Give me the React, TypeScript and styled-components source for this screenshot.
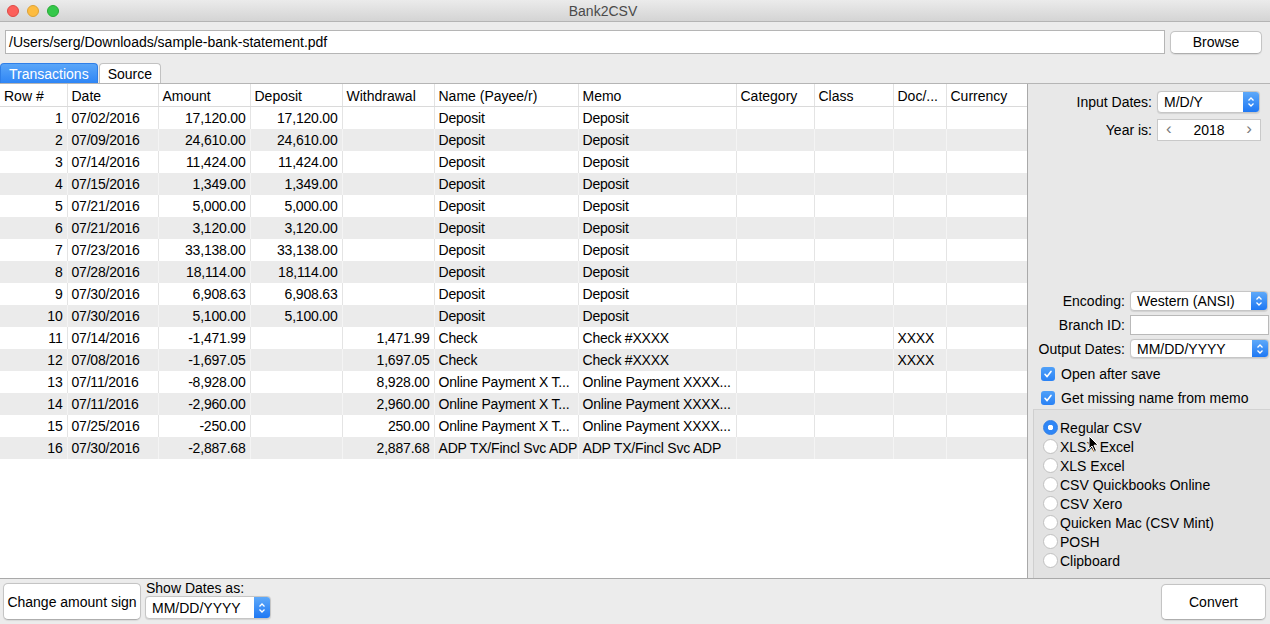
import React from "react";
import styled, { createGlobalStyle } from "styled-components";

const GlobalStyle = createGlobalStyle`
  html, body {
    margin: 0;
    padding: 0;
    background: #ececec;
  }
  body {
    font-family: "Liberation Sans", Arial, sans-serif;
    font-size: 14px;
    color: #000;
  }
`;

interface IRow {
  date: string;
  amount: string;
  deposit: string;
  withdrawal: string;
  name: string;
  memo: string;
  doc: string;
}

const rows: IRow[] = [
  { date: "07/02/2016", amount: "17,120.00", deposit: "17,120.00", withdrawal: "", name: "Deposit", memo: "Deposit", doc: "" },
  { date: "07/09/2016", amount: "24,610.00", deposit: "24,610.00", withdrawal: "", name: "Deposit", memo: "Deposit", doc: "" },
  { date: "07/14/2016", amount: "11,424.00", deposit: "11,424.00", withdrawal: "", name: "Deposit", memo: "Deposit", doc: "" },
  { date: "07/15/2016", amount: "1,349.00", deposit: "1,349.00", withdrawal: "", name: "Deposit", memo: "Deposit", doc: "" },
  { date: "07/21/2016", amount: "5,000.00", deposit: "5,000.00", withdrawal: "", name: "Deposit", memo: "Deposit", doc: "" },
  { date: "07/21/2016", amount: "3,120.00", deposit: "3,120.00", withdrawal: "", name: "Deposit", memo: "Deposit", doc: "" },
  { date: "07/23/2016", amount: "33,138.00", deposit: "33,138.00", withdrawal: "", name: "Deposit", memo: "Deposit", doc: "" },
  { date: "07/28/2016", amount: "18,114.00", deposit: "18,114.00", withdrawal: "", name: "Deposit", memo: "Deposit", doc: "" },
  { date: "07/30/2016", amount: "6,908.63", deposit: "6,908.63", withdrawal: "", name: "Deposit", memo: "Deposit", doc: "" },
  { date: "07/30/2016", amount: "5,100.00", deposit: "5,100.00", withdrawal: "", name: "Deposit", memo: "Deposit", doc: "" },
  { date: "07/14/2016", amount: "-1,471.99", deposit: "", withdrawal: "1,471.99", name: "Check", memo: "Check #XXXX", doc: "XXXX" },
  { date: "07/08/2016", amount: "-1,697.05", deposit: "", withdrawal: "1,697.05", name: "Check", memo: "Check #XXXX", doc: "XXXX" },
  { date: "07/11/2016", amount: "-8,928.00", deposit: "", withdrawal: "8,928.00", name: "Online Payment X T...", memo: "Online Payment XXXX...", doc: "" },
  { date: "07/11/2016", amount: "-2,960.00", deposit: "", withdrawal: "2,960.00", name: "Online Payment X T...", memo: "Online Payment XXXX...", doc: "" },
  { date: "07/25/2016", amount: "-250.00", deposit: "", withdrawal: "250.00", name: "Online Payment X T...", memo: "Online Payment XXXX...", doc: "" },
  { date: "07/30/2016", amount: "-2,887.68", deposit: "", withdrawal: "2,887.68", name: "ADP TX/Fincl Svc ADP", memo: "ADP TX/Fincl Svc ADP", doc: "" },
];

const columns = [
  { title: "Row #", width: 67, right: true },
  { title: "Date", width: 91 },
  { title: "Amount", width: 92, right: true },
  { title: "Deposit", width: 92, right: true },
  { title: "Withdrawal", width: 92, right: true },
  { title: "Name (Payee/r)", width: 144 },
  { title: "Memo", width: 158 },
  { title: "Category", width: 78 },
  { title: "Class", width: 79 },
  { title: "Doc/...", width: 53 },
  { title: "Currency", width: 81 },
];

const formats = [
  "Regular CSV",
  "XLSX Excel",
  "XLS Excel",
  "CSV Quickbooks Online",
  "CSV Xero",
  "Quicken Mac (CSV Mint)",
  "POSH",
  "Clipboard",
];

const Chevrons = () => (
  <svg width="8" height="12" viewBox="0 0 8 12">
    <path d="M1.5 4.5 L4 2 L6.5 4.5" fill="none" stroke="#fff" strokeWidth="1.3" />
    <path d="M1.5 7.5 L4 10 L6.5 7.5" fill="none" stroke="#fff" strokeWidth="1.3" />
  </svg>
);

const Select: React.FC<{ value: string; width: number; height?: number }> = ({ value, width, height = 22 }) => (
  <SelectBox $w={width} $h={height}>
    <SelectValue>{value}</SelectValue>
    <SelectArrow>
      <Chevrons />
    </SelectArrow>
  </SelectBox>
);

const Check = () => (
  <CheckBox>
    <svg width="10" height="10" viewBox="0 0 10 10">
      <path d="M2 5.3 L4.1 7.6 L8 2.4" fill="none" stroke="#fff" strokeWidth="1.6" strokeLinecap="round" strokeLinejoin="round" />
    </svg>
  </CheckBox>
);

const App: React.FC = () => {
  return (
    <Window>
      <GlobalStyle />
      <TitleBar>
        <Lights>
          <Light $c="#fc605b" $b="#de4a45" />
          <Light $c="#fdbc40" $b="#dea236" />
          <Light $c="#34c84a" $b="#27aa35" />
        </Lights>
        <Title>Bank2CSV</Title>
      </TitleBar>

      <PathRow>
        <PathInput>/Users/serg/Downloads/sample-bank-statement.pdf</PathInput>
        <PushButton $w={92} $h={23}>Browse</PushButton>
      </PathRow>

      <TabRow>
        <Tab $active>Transactions</Tab>
        <Tab>Source</Tab>
      </TabRow>

      <Body>
        <TablePanel>
          <Table>
            <colgroup>
              {columns.map((c) => (
                <col key={c.title} style={{ width: c.width }} />
              ))}
            </colgroup>
            <thead>
              <tr>
                {columns.map((c) => (
                  <Th key={c.title}>{c.title}</Th>
                ))}
              </tr>
            </thead>
            <tbody>
              {rows.map((r, i) => {
                const stripe = i % 2 === 1;
                const cells = [String(i + 1), r.date, r.amount, r.deposit, r.withdrawal, r.name, r.memo, "", "", r.doc, ""];
                return (
                  <Tr key={i} $stripe={stripe}>
                    {cells.map((v, j) => (
                      <Td key={j} $right={!!columns[j].right} $stripe={stripe}>
                        {v}
                      </Td>
                    ))}
                  </Tr>
                );
              })}
            </tbody>
          </Table>
        </TablePanel>

        <SidePanel>
          <FormGrid>
            <Label>Input Dates:</Label>
            <Select value="M/D/Y" width={103} />
            <Label>Year is:</Label>
            <Stepper>
              <StepArrow>‹</StepArrow>
              <span>2018</span>
              <StepArrow>›</StepArrow>
            </Stepper>
          </FormGrid>

          <Spacer />

          <FormGrid $tight>
            <Label>Encoding:</Label>
            <Select value="Western (ANSI)" width={138} height={20} />
            <Label>Branch ID:</Label>
            <TextField />
            <Label>Output Dates:</Label>
            <Select value="MM/DD/YYYY" width={139} height={19} />
          </FormGrid>

          <CheckList>
            <CheckRow>
              <Check />
              Open after save
            </CheckRow>
            <CheckRow>
              <Check />
              Get missing name from memo
            </CheckRow>
          </CheckList>

          <RadioGroup>
            {formats.map((f, i) => (
              <RadioRow key={f}>
                <Radio $on={i === 0} />
                {f}
              </RadioRow>
            ))}
            <Pointer>
              <svg width="12" height="18" viewBox="0 0 12 18">
                <path d="M1 1 L1 14 L4 11 L6.5 16.5 L8.5 15.6 L6 10.2 L10.2 10.2 Z" fill="#000" stroke="#fff" strokeWidth="1" />
              </svg>
            </Pointer>
          </RadioGroup>
        </SidePanel>
      </Body>

      <BottomBar>
        <PushButton $w={138} $h={37}>Change amount sign</PushButton>
        <ShowDates>
          <SmallLabel>Show Dates as:</SmallLabel>
          <Select value="MM/DD/YYYY" width={126} height={23} />
        </ShowDates>
        <BottomSpacer />
        <PushButton $w={105} $h={36}>Convert</PushButton>
      </BottomBar>
    </Window>
  );
};

export default App;

const Window = styled.div`
  width: 1270px;
  height: 624px;
  display: flex;
  flex-direction: column;
  background: #ececec;
  overflow: hidden;
  position: relative;
`;

const TitleBar = styled.div`
  height: 22px;
  flex: none;
  position: relative;
  display: flex;
  align-items: center;
  justify-content: center;
  background: linear-gradient(#ebebeb, #d4d4d4);
  border-bottom: 1px solid #b4b4b4;
  box-sizing: border-box;
`;

const Lights = styled.div`
  position: absolute;
  left: 7px;
  top: 5px;
  display: flex;
  gap: 8px;
`;

const Light = styled.div<{ $c: string; $b: string }>`
  width: 12px;
  height: 12px;
  border-radius: 50%;
  background: ${(p) => p.$c};
  box-sizing: border-box;
  border: 0.5px solid ${(p) => p.$b};
`;

const Title = styled.div`
  color: #4a4a4a;
  font-size: 14px;
  margin-left: -64px;
`;

const PathRow = styled.div`
  display: flex;
  align-items: center;
  gap: 5px;
  padding: 8px 8px 0 5px;
  height: 24px;
`;

const PathInput = styled.div`
  flex: 1;
  height: 24px;
  box-sizing: border-box;
  background: #fff;
  border: 1px solid #b5b5b5;
  padding: 0 3px;
  display: flex;
  align-items: center;
`;

const PushButton = styled.div<{ $w: number; $h: number }>`
  width: ${(p) => p.$w}px;
  height: ${(p) => p.$h}px;
  flex: none;
  box-sizing: border-box;
  background: #fff;
  border: 1px solid #c4c4c4;
  border-bottom-color: #aeaeae;
  border-radius: 5px;
  display: flex;
  align-items: center;
  justify-content: center;
  box-shadow: 0 0.5px 1px rgba(0, 0, 0, 0.08);
`;

const TabRow = styled.div`
  display: flex;
  align-items: flex-end;
  height: 20px;
  margin-top: 9px;
  border-bottom: 1px solid #b5b5b5;
  flex: none;
`;

const Tab = styled.div<{ $active?: boolean }>`
  height: 20px;
  box-sizing: border-box;
  padding: 0 8px;
  display: flex;
  align-items: center;
  border-radius: 4px 4px 0 0;
  margin-right: 1px;
  color: ${(p) => (p.$active ? "#fff" : "#000")};
  background: ${(p) => (p.$active ? "linear-gradient(#5aa6f8, #2f86f6)" : "#fff")};
  border: 1px solid ${(p) => (p.$active ? "#2f7fe8" : "#c2c2c2")};
  border-bottom: none;
`;

const Body = styled.div`
  flex: 1;
  display: flex;
  min-height: 0;
`;

const TablePanel = styled.div`
  width: 1028px;
  flex: none;
  box-sizing: border-box;
  background: #fff;
  border-right: 1px solid #a9a9a9;
  overflow: hidden;
`;

const Table = styled.table`
  width: 1027px;
  table-layout: fixed;
  border-collapse: collapse;
`;

const Th = styled.th`
  height: 21px;
  padding: 1px 4px 0;
  text-align: left;
  font-weight: normal;
  white-space: nowrap;
  overflow: hidden;
  border-right: 1px solid #e2e2e2;
  border-bottom: 1px solid #dadada;
  &:last-child {
    border-right: none;
  }
`;

const Tr = styled.tr<{ $stripe: boolean }>`
  height: 22px;
  background: ${(p) => (p.$stripe ? "#ebebeb" : "#fff")};
`;

const Td = styled.td<{ $right: boolean; $stripe: boolean }>`
  padding: 0 4px;
  text-align: ${(p) => (p.$right ? "right" : "left")};
  white-space: nowrap;
  overflow: hidden;
  letter-spacing: -0.2px;
  border-right: 1px solid ${(p) => (p.$stripe ? "#f4f4f4" : "#e4e4e4")};
  &:last-child {
    border-right: none;
  }
`;

const SidePanel = styled.div`
  flex: 1;
  display: flex;
  flex-direction: column;
  background: #e8e8e8;
`;

const FormGrid = styled.div<{ $tight?: boolean }>`
  display: grid;
  grid-template-columns: ${(p) => (p.$tight ? "97px 1fr" : "124px 1fr")};
  column-gap: 5px;
  row-gap: ${(p) => (p.$tight ? "4px" : "6px")};
  align-items: center;
  padding: ${(p) => (p.$tight ? "0" : "7px 0 0 0")};
`;

const Label = styled.div`
  text-align: right;
  white-space: nowrap;
`;

const SelectBox = styled.div<{ $w: number; $h: number }>`
  width: ${(p) => p.$w}px;
  height: ${(p) => p.$h}px;
  box-sizing: border-box;
  display: flex;
  background: #fff;
  border: 1px solid #c6c6c6;
  border-radius: 4px;
  overflow: hidden;
  box-shadow: 0 0.5px 1px rgba(0, 0, 0, 0.1);
`;

const SelectValue = styled.div`
  flex: 1;
  display: flex;
  align-items: center;
  padding-left: 6px;
  white-space: nowrap;
`;

const SelectArrow = styled.div`
  width: 16px;
  display: flex;
  align-items: center;
  justify-content: center;
  background: linear-gradient(#5ea9f9, #1e78f4);
`;

const Stepper = styled.div`
  width: 104px;
  height: 22px;
  box-sizing: border-box;
  background: #fff;
  border: 1px solid #c9c9c9;
  display: flex;
  align-items: center;
  justify-content: space-between;
  padding: 0 8px;
`;

const StepArrow = styled.span`
  color: #7a7a7a;
  font-size: 17px;
  line-height: 1;
  margin-top: -3px;
`;

const TextField = styled.div`
  width: 139px;
  height: 20px;
  box-sizing: border-box;
  background: #fff;
  border: 1px solid #b9b9b9;
`;

const Spacer = styled.div`
  flex: 1;
`;

const CheckList = styled.div`
  display: flex;
  flex-direction: column;
  gap: 6px;
  padding: 7px 0 0 13px;
`;

const CheckRow = styled.div`
  display: flex;
  align-items: center;
  gap: 6px;
  height: 18px;
`;

const CheckBox = styled.div`
  width: 14px;
  height: 14px;
  border-radius: 3px;
  background: linear-gradient(#4fa0f8, #2a82f5);
  display: flex;
  align-items: center;
  justify-content: center;
`;

const RadioGroup = styled.div`
  position: relative;
  margin: 2px 0 0 5px;
  height: 169px;
  box-sizing: border-box;
  background: #e2e2e2;
  border-top: 1px solid #d2d2d2;
  border-left: 1px solid #cfcfcf;
  padding: 8px 0 0 9px;
  display: flex;
  flex-direction: column;
`;

const RadioRow = styled.div`
  height: 19px;
  display: flex;
  align-items: center;
  gap: 2px;
`;

const Radio = styled.div<{ $on: boolean }>`
  width: 15px;
  height: 15px;
  box-sizing: border-box;
  border-radius: 50%;
  background: ${(p) => (p.$on ? "radial-gradient(circle, #fff 0 2.5px, #2f86f6 3px)" : "#fff")};
  border: 1px solid ${(p) => (p.$on ? "#2f7fe8" : "#c0c0c0")};
`;

const Pointer = styled.div`
  position: absolute;
  left: 54px;
  top: 25px;
  line-height: 0;
`;

const BottomBar = styled.div`
  height: 46px;
  flex: none;
  box-sizing: border-box;
  border-top: 1px solid #a9a9a9;
  display: flex;
  align-items: flex-end;
  padding: 0 4px 4px 3px;
  gap: 4px;
`;

const ShowDates = styled.div`
  display: flex;
  flex-direction: column;
  gap: 0;
  padding-bottom: 1px;
`;

const SmallLabel = styled.div`
  padding-left: 1px;
`;

const BottomSpacer = styled.div`
  flex: 1;
`;
